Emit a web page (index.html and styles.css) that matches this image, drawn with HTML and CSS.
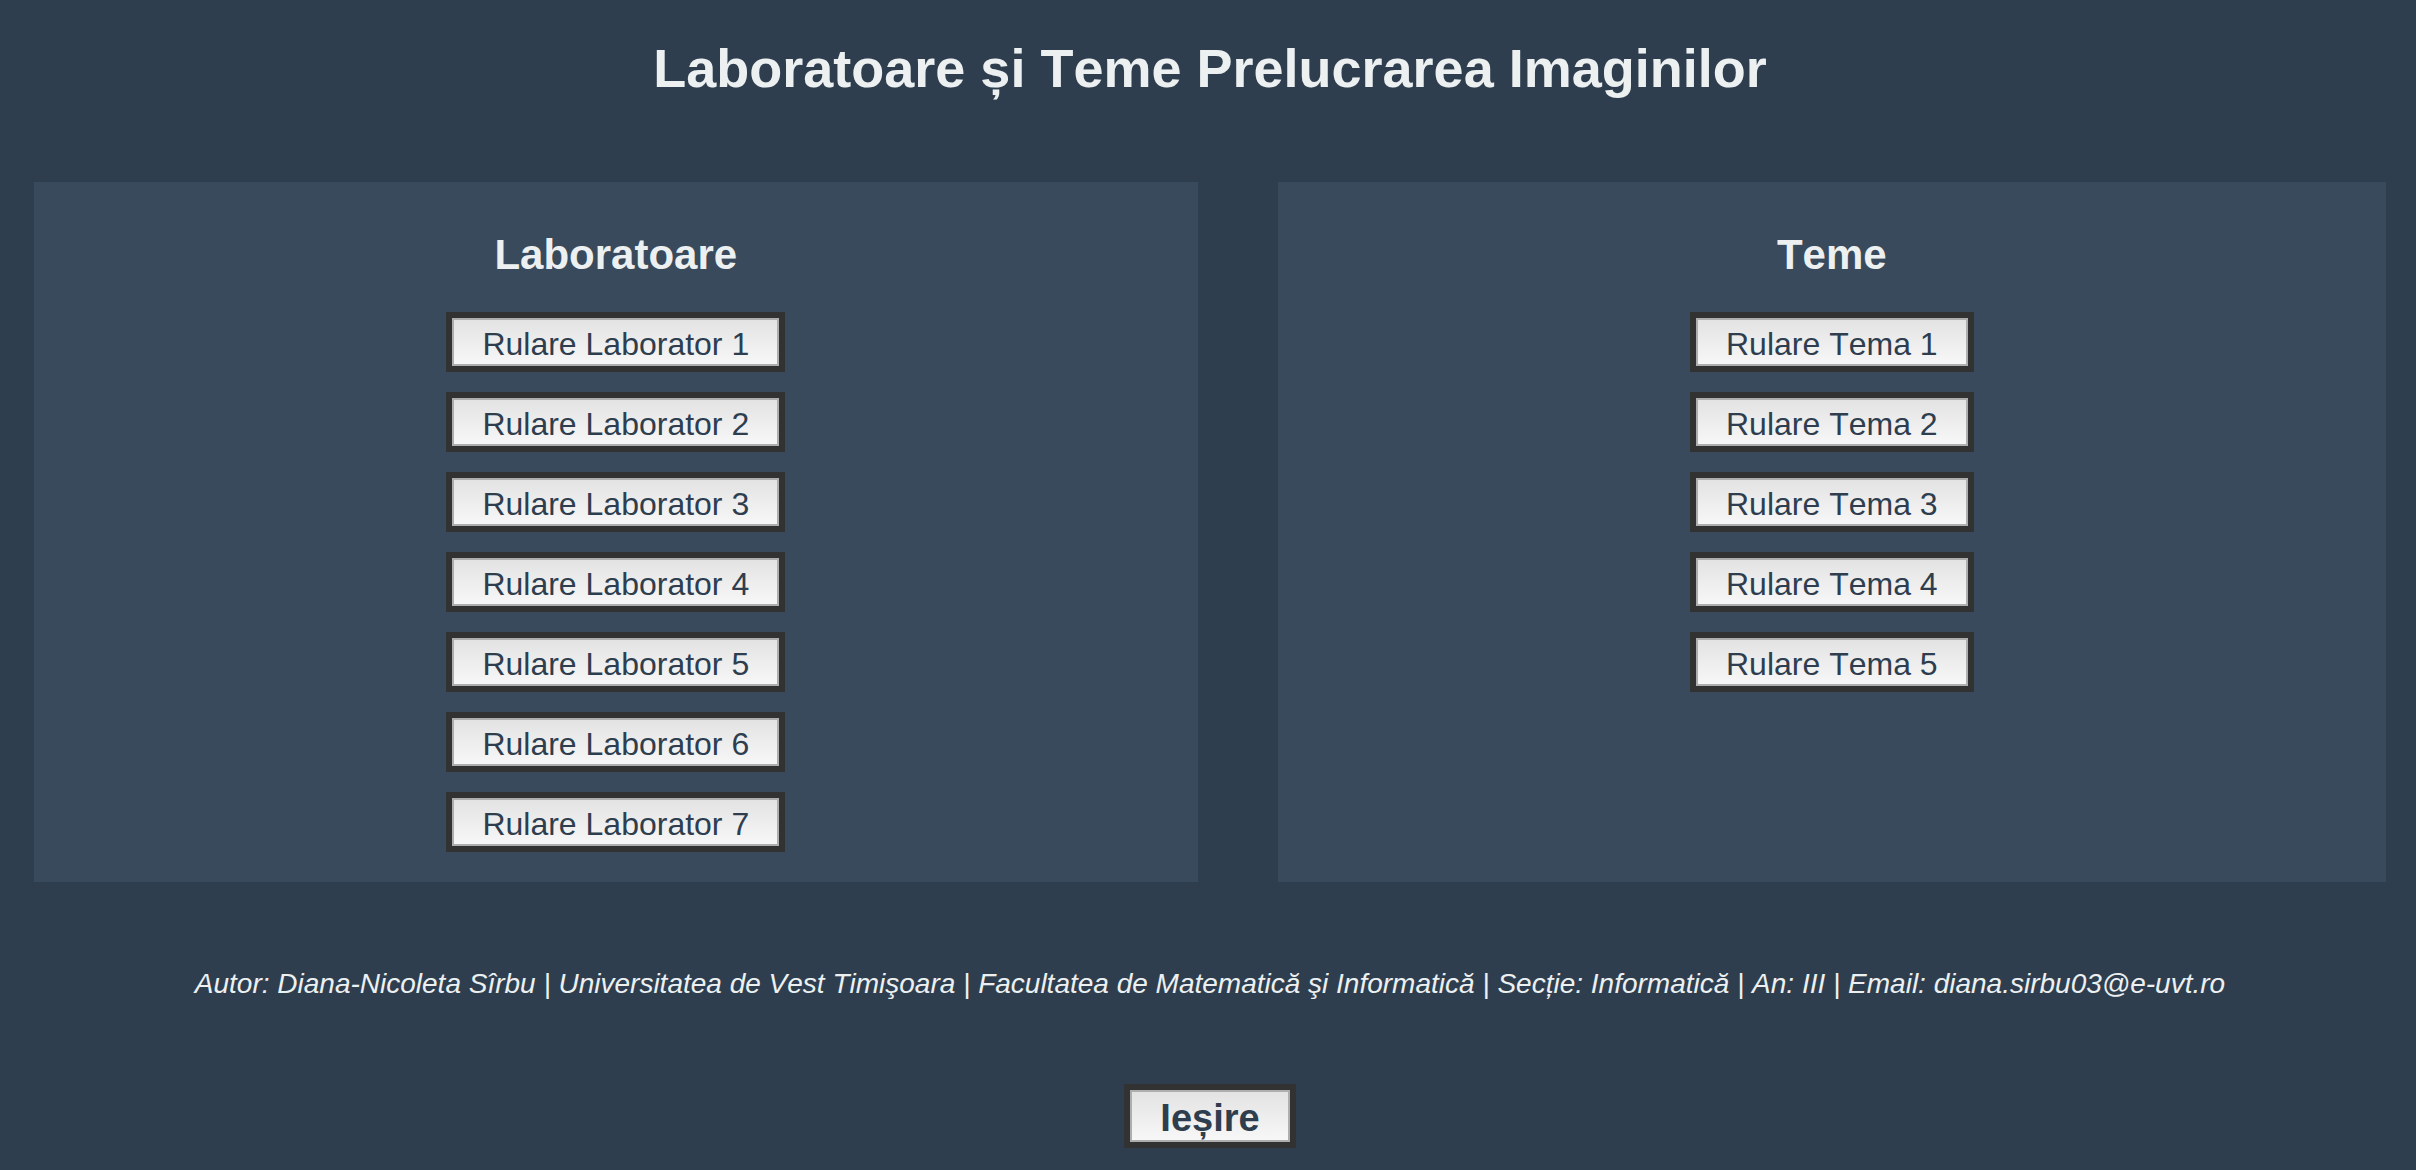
FILE: index.html
```html
<!DOCTYPE html>
<html lang="ro">
<head>
<meta charset="utf-8">
<title>Laboratoare și Teme Prelucrarea Imaginilor</title>
<link rel="stylesheet" href="styles.css">
</head>
<body>
<h1 class="title">Laboratoare și Teme Prelucrarea Imaginilor</h1>
<main class="panels">
<section class="panel">
<h2 class="panel-title">Laboratoare</h2>
<button class="button" type="button">Rulare Laborator 1</button>
<button class="button" type="button">Rulare Laborator 2</button>
<button class="button" type="button">Rulare Laborator 3</button>
<button class="button" type="button">Rulare Laborator 4</button>
<button class="button" type="button">Rulare Laborator 5</button>
<button class="button" type="button">Rulare Laborator 6</button>
<button class="button" type="button">Rulare Laborator 7</button>
</section>
<section class="panel">
<h2 class="panel-title">Teme</h2>
<button class="button" type="button">Rulare Tema 1</button>
<button class="button" type="button">Rulare Tema 2</button>
<button class="button" type="button">Rulare Tema 3</button>
<button class="button" type="button">Rulare Tema 4</button>
<button class="button" type="button">Rulare Tema 5</button>
</section>
</main>
<footer class="footer">
<p class="author">Autor: Diana-Nicoleta Sîrbu | Universitatea de Vest Timişoara | Facultatea de Matematică şi Informatică | Secție: Informatică | An: III | Email: diana.sirbu03@e-uvt.ro</p>
<button class="button button-exit" type="button">Ieșire</button>
</footer>
</body>
</html>
```
FILE: styles.css
```css
* {
  box-sizing: border-box;
}

body {
  margin: 0;
  padding: 0 30px 0 34px;
  background: #2e3e4f;
  color: #ecf0f1;
  font-family: "Liberation Sans", Arial, sans-serif;
  font-kerning: none;
}

.title {
  margin: 0;
  padding: 36px 0 82px;
  font-size: 54px;
  line-height: 64px;
  text-align: center;
}

.panels {
  display: flex;
  gap: 80px;
}

.panel {
  display: flex;
  flex: 1 1 auto;
  flex-direction: column;
  align-items: center;
  gap: 20px;
  padding: 48px 20px 30px;
  background: #394a5c;
}

.panel-title {
  margin: 0 0 12px;
  font-size: 42px;
  line-height: 50px;
}

.button {
  padding: 4px 30px 0;
  border: 6px solid #323232;
  border-radius: 0;
  box-shadow: inset 0 0 0 2px #aeaeae;
  background: linear-gradient(#e2e2e2, #f8f8f8);
  color: #2e3e4f;
  font-family: inherit;
  font-size: 32px;
  font-kerning: none;
  line-height: 44px;
  white-space: nowrap;
}

.footer {
  display: flex;
  flex-direction: column;
  align-items: center;
  padding: 86px 0 22px;
}

.author {
  margin: 0 0 84px;
  font-size: 28px;
  font-style: italic;
  line-height: 32px;
  text-align: center;
}

.button-exit {
  font-size: 38px;
  font-weight: bold;
  line-height: 48px;
}
```
